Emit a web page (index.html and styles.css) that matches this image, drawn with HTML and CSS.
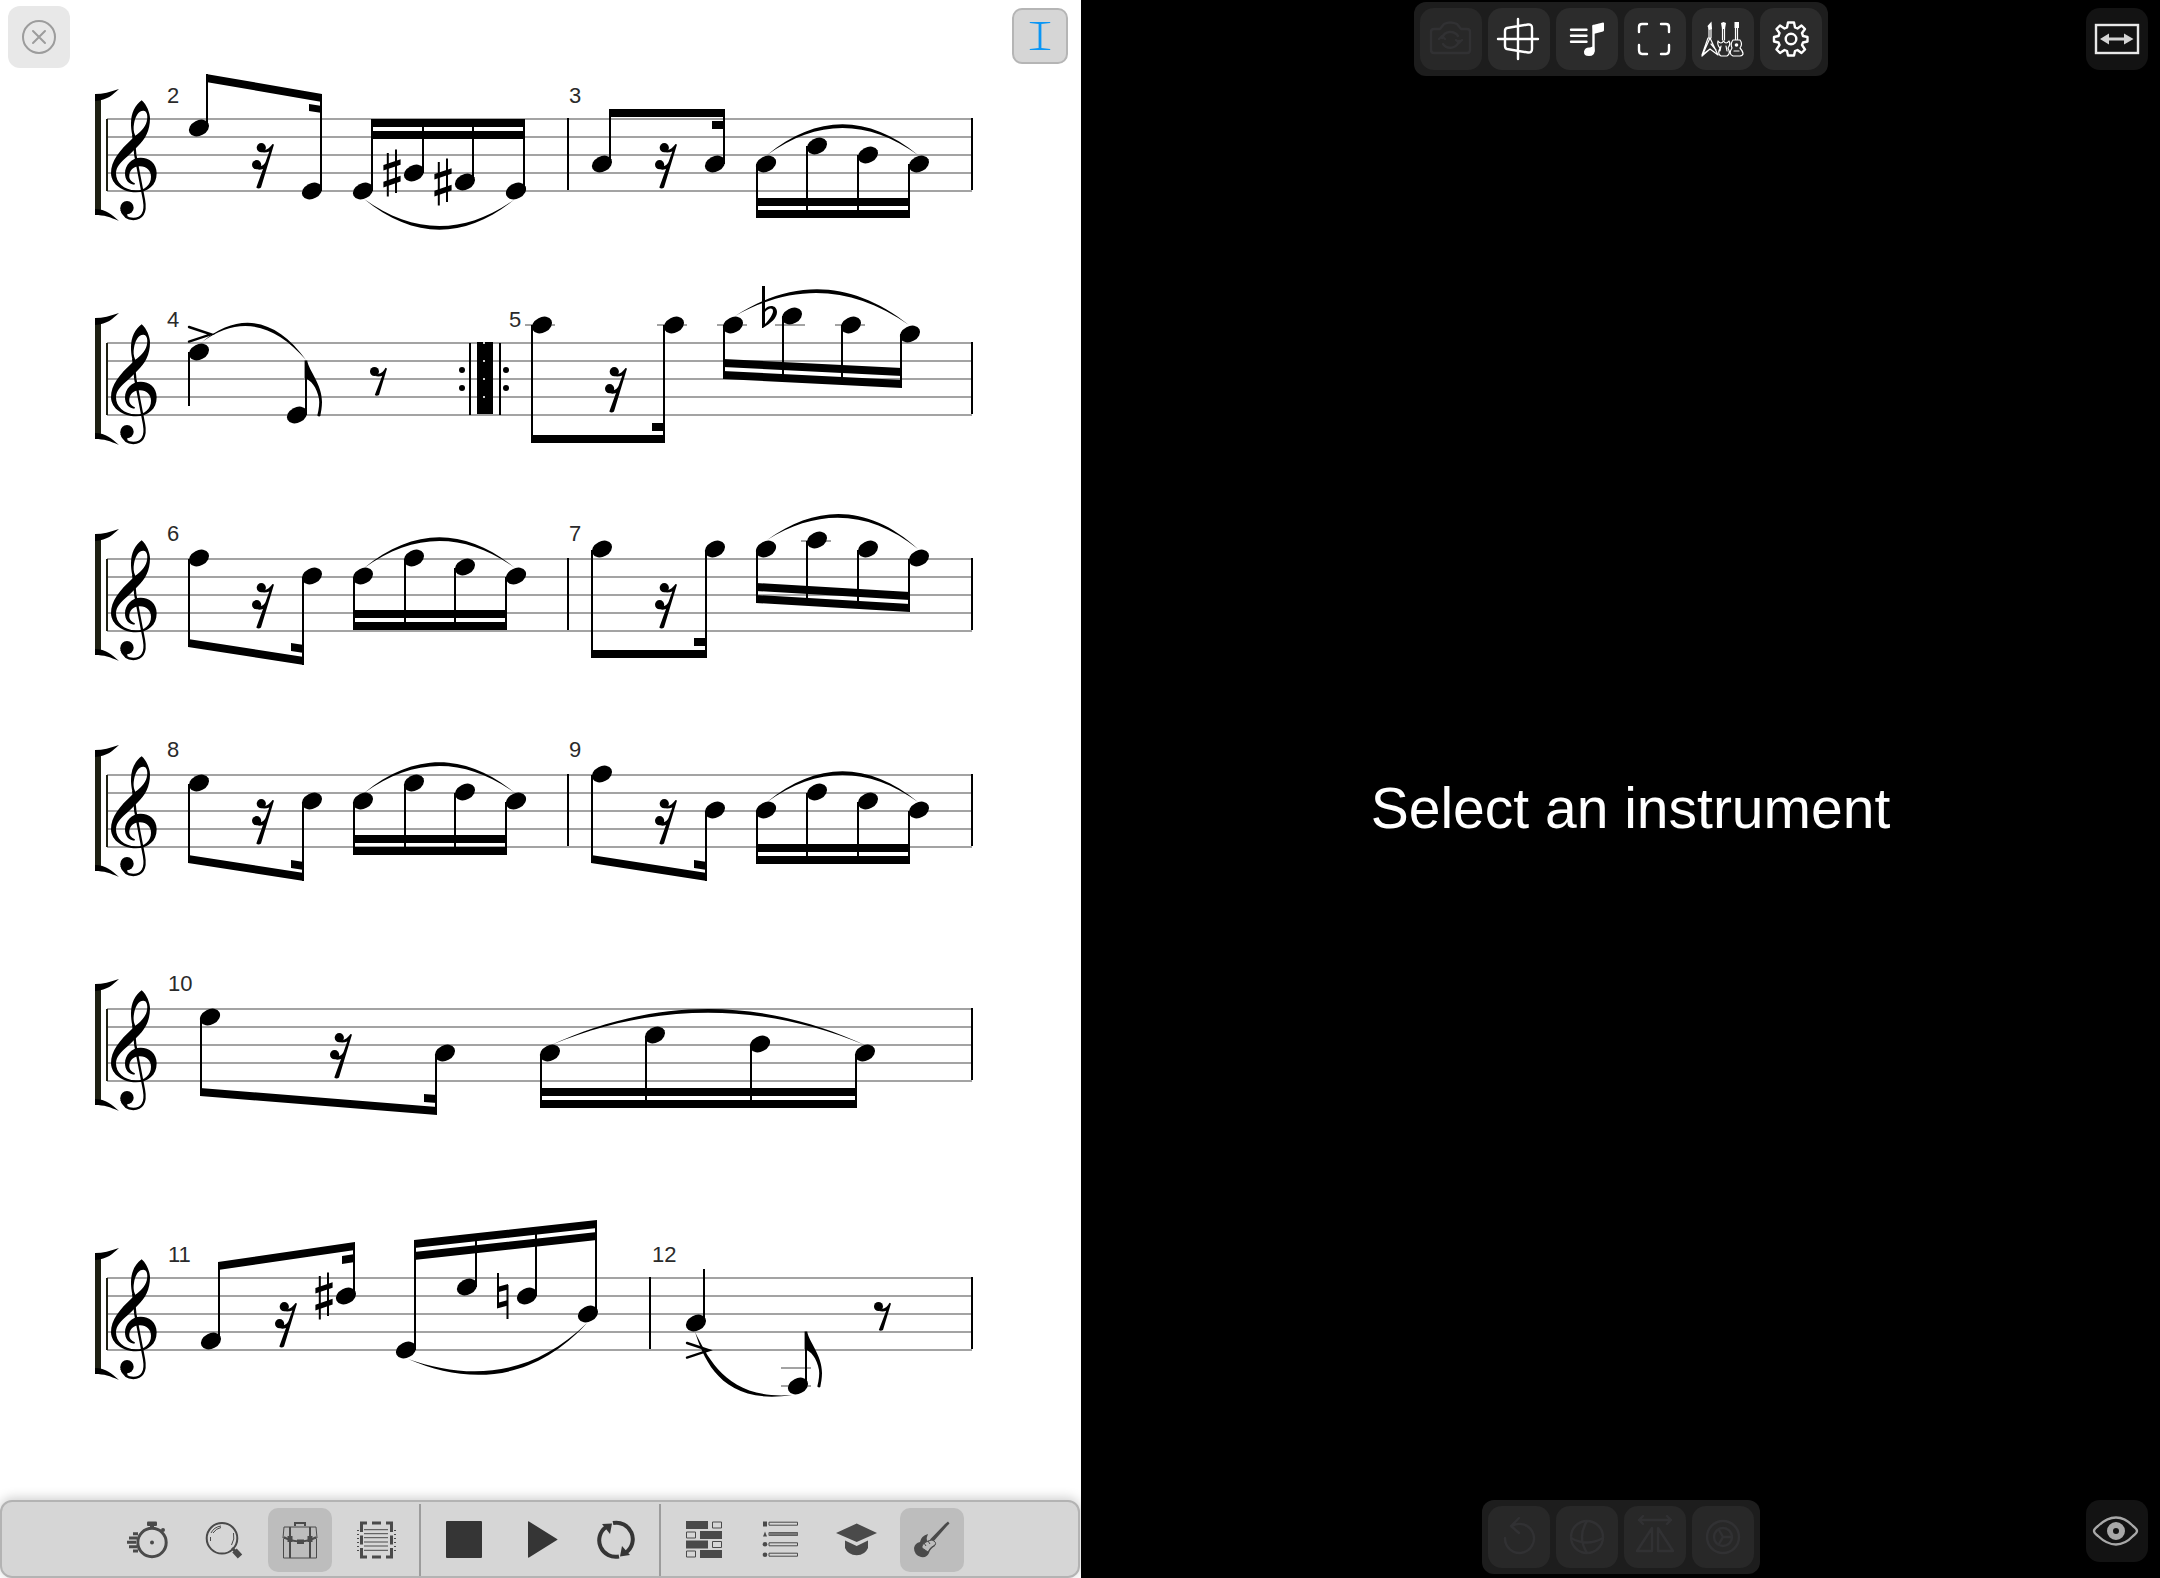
FILE: index.html
```html
<!DOCTYPE html>
<html lang="en">
<head>
<meta charset="utf-8">
<meta name="viewport" content="width=device-width, initial-scale=1">
<title>Score and instrument</title>
<link rel="stylesheet" href="styles.css">
</head>
<body>
<svg class="defs" aria-hidden="true">
  <defs>
    <ellipse id="head" rx="10.6" ry="7.7" transform="rotate(-27)"/>
    <g id="clef">
      <path d="M185 151C165 165 153 190 153 220C153 240 156 252 159 264C118 302 93 332 93 370C94 405 130 427 168 427C205 427 230 405 230 370C230 340 208 323 182 323C155 323 135 345 135 370C135 390 145 402 163 404L165 400C150 393 147 385 148 375C150 358 163 349 180 349C200 349 213 362 213 380C213 404 195 421 168 421C130 421 108 397 108 370C108 341 140 325 172 290C196 268 210 242 210 205C210 190 200 163 185 151ZM190 182C202 182 204 200 200 215C195 233 180 247 166 257C160 245 160 233 162 222C165 200 175 182 190 182Z"/>
      <path class="curl" d="M160 255L166 315L192 450C199 490 185 507 160 507C143 507 130 497 124 479"/>
      <circle cx="141" cy="473" r="20"/>
      <path d="M121 473L125 490L143 500L141 490L150 487Z"/>
    </g>
    <g id="staff">
      <path class="line" d="M107 0H972M107 18H972M107 36H972M107 54H972M107 72H972"/>
      <path class="edge" d="M107 0V72"/>
      <path class="bar" d="M972 -1V71"/>
      <rect class="brace" x="95" y="-22" width="6" height="115"/>
      <path d="M95 -25C103 -25 110 -27 119 -30C112 -24 108 -19 95 -18ZM95 90C106 90 112 96 119 102C110 98 104 96 95 96Z"/>
      <use href="#clef" transform="translate(80 -69) scale(.3333)"/>
    </g>
    <g id="rest16"><circle cx="9.3" cy="4.7" r="4.6"/><circle cx="4.6" cy="21.7" r="4.6"/><path d="M20.5 1L22 1.4L9 44.5Q6.5 46.5 4.3 44.5L17.3 8.4Q13 10 9 9L12 7.5Q17 6 20.5 1ZM8 23Q12 23 14 18L13 25Q8 28 5 26Z"/></g>
    <g id="rest8"><circle cx="4.5" cy="4.5" r="4.5"/><path d="M15.5 .8L17 1.4L9 28Q6.5 29.5 4.8 28L12.2 8.8Q9 10 5 9L8 7Q13 6 15.5 .8Z"/></g>
    <g id="sharp"><path class="thin" d="M-4.2 -20V23.5M4 -23.5V20"/><path d="M-8.6 -8L8.6 -13.8V-8.2L-8.6 -2.4ZM-8.6 8.8L8.6 2.8V8.4L-8.6 14.4Z"/></g>
    <path id="accent" class="accent" d="M0 0L22 7.3L0 14.6"/>
    <path id="flag" d="M-1.4 -.5H1.2C2.4 9 16 23 16 41C16 46 15 51 14.3 55Q13 56 11.3 54.5C13 48 13.6 42 13 38C11 26 4.5 19 -1.4 17Z"/>
    <path id="slur" d="M0 0C50 -41 101 -41 151 0C101 -36 50 -36 0 0Z"/>
  </defs>
</svg>

<main class="app">
  <section class="score-pane" aria-label="Score">
    <button class="close" aria-label="Close"><svg viewBox="0 0 62 62"><circle cx="31" cy="31" r="16"/><path d="M25 25L37 37M37 25L25 37"/></svg></button>
    <button class="cursor" aria-label="Text cursor"><svg viewBox="0 0 56 56"><path d="M17 13H39V14L29.5 15V41L39 42V43H17V42L26.500 41V15L17 14Z"/></svg></button>

    <div class="score">
      <svg class="system" viewBox="0 -119 1080 260">
        <use href="#staff"/>
        <text x="167" y="-16">2</text>
        <use href="#head" x="199" y="9"/><use href="#head" x="312" y="72"/>
        <path class="stem" d="M207 9V-45M321 72V-25"/>
        <path d="M206 -45L322 -25V-17L206 -37ZM309 -15L322 -13V-6L309 -8Z"/>
        <use href="#rest16" x="252" y="24"/>
        <use href="#head" x="363" y="72"/><use href="#head" x="414" y="54"/><use href="#head" x="465" y="63"/><use href="#head" x="516" y="72"/>
        <use href="#sharp" x="392" y="54"/><use href="#sharp" x="443" y="63"/>
        <path class="stem" d="M372 72V0M423 54V0M473 63V0M524 72V0"/>
        <path d="M371 0H525V8H371ZM371 12H525V20H371Z"/>
        <use href="#slur" transform="translate(364 80) scale(1 -1)"/>
        <path class="bar" d="M568 -1V71"/>
        <text x="569" y="-16">3</text>
        <use href="#head" x="602" y="45"/><use href="#head" x="715" y="45"/>
        <path class="stem" d="M610 45V-10M724 45V-10"/>
        <path d="M609 -10H725V-2H609ZM712 2H725V10H712Z"/>
        <use href="#rest16" x="655" y="24"/>
        <use href="#head" x="766" y="45"/><use href="#head" x="817" y="27"/><use href="#head" x="868" y="36"/><use href="#head" x="919" y="45"/>
        <path class="stem" d="M757 45V98M807 27V98M858 36V98M909 45V98"/>
        <path d="M756 79H910V87H756ZM756 91H910V99H756Z"/>
        <use href="#slur" x="767" y="36"/>
      </svg>

      <svg class="system" viewBox="0 -83 1080 220">
        <use href="#staff"/>
        <text x="167" y="-16">4</text>
        <use href="#accent" x="189" y="-16"/>
        <use href="#head" x="199" y="9"/><use href="#head" x="297" y="72"/>
        <path class="stem" d="M189 9V63M306 72V18"/>
        <use href="#flag" x="306" y="18"/>
        <path d="M202 -1C239 -32 276 -25 306 17C274 -20 239 -28 202 -1Z"/>
        <use href="#rest8" x="370" y="24"/>
        <circle cx="462" cy="27" r="3"/><circle cx="462" cy="45" r="3"/><circle cx="506" cy="27" r="3"/><circle cx="506" cy="45" r="3"/>
        <path class="bar" d="M470 0V72M500 0V72"/>
        <rect x="477" y="-1" width="16" height="72"/>
        <path class="speck" d="M483 0h2M483 18h2M483 36h2M483 54h2"/>
        <text x="509" y="-16">5</text>
        <path class="ledger" d="M525 -18H555M657 -18H687M717 -18H747M775 -18H805M835 -18H865"/>
        <use href="#head" x="542" y="-18"/><use href="#head" x="674" y="-18"/>
        <path class="stem" d="M532 -18V99M664 -18V99"/>
        <path d="M531 92H665V100H531ZM652 80H665V88H652Z"/>
        <use href="#rest16" x="605" y="24"/>
        <use href="#head" x="733" y="-18"/><use href="#head" x="792" y="-27"/><use href="#head" x="851" y="-18"/><use href="#head" x="910" y="-9"/>
        <path class="stem" d="M724 -18V35M783 -27V37M842 -18V40M901 -9V44"/>
        <path d="M723 16L902 25V33L723 24ZM723 28L902 37V45L723 36Z"/>
        <path fill-rule="evenodd" d="M762 -57H765V-34C769 -39 777 -38 777 -31C777 -25 771 -20 763 -15H762ZM765 -31V-19C770 -24 773 -29 773 -32C773 -36 768 -35 765 -31Z"/>
        <path d="M735 -27C794 -65 852 -63 909 -18C852 -58 794 -60 735 -27Z"/>
      </svg>

      <svg class="system" viewBox="0 -79 1080 220">
        <use href="#staff"/>
        <text x="167" y="-18">6</text>
        <use href="#head" x="199" y="-1"/><use href="#head" x="312" y="17"/>
        <path class="stem" d="M189 0V87M303 18V106"/>
        <path d="M188 80L304 98V106L188 88ZM291 84L304 86V94L291 92Z"/>
        <use href="#rest16" x="252" y="24"/>
        <use href="#head" x="363" y="17"/><use href="#head" x="414" y="-1"/><use href="#head" x="465" y="8"/><use href="#head" x="516" y="17"/>
        <path class="stem" d="M354 18V70M405 0V70M455 9V70M506 18V70"/>
        <path d="M353 51H507V59H353ZM353 63H507V71H353Z"/>
        <use href="#slur" x="364" y="9"/>
        <path class="bar" d="M568 -1V71"/>
        <text x="569" y="-18">7</text>
        <path class="ledger" d="M801 -18H831"/>
        <use href="#head" x="602" y="-10"/><use href="#head" x="715" y="-10"/>
        <path class="stem" d="M592 -9V98M706 -9V98"/>
        <path d="M591 91H707V99H591ZM694 79H707V87H694Z"/>
        <use href="#rest16" x="655" y="24"/>
        <use href="#head" x="766" y="-10"/><use href="#head" x="817" y="-19"/><use href="#head" x="868" y="-10"/><use href="#head" x="919" y="-1"/>
        <path class="stem" d="M757 -9V43M807 -18V46M858 -9V49M909 0V52"/>
        <path d="M756 24L910 33V41L756 32ZM756 36L910 45V53L756 44Z"/>
        <path d="M767 -19C818 -56 870 -54 918 -10C870 -49 818 -51 767 -19Z"/>
      </svg>

      <svg class="system" viewBox="0 -75 1080 230">
        <use href="#staff"/>
        <text x="167" y="-18">8</text>
        <use href="#head" x="199" y="8"/><use href="#head" x="312" y="26"/>
        <path class="stem" d="M189 9V87M303 27V106"/>
        <path d="M188 80L304 98V106L188 88ZM291 85L304 87V95L291 93Z"/>
        <use href="#rest16" x="252" y="24"/>
        <use href="#head" x="363" y="26"/><use href="#head" x="414" y="8"/><use href="#head" x="465" y="17"/><use href="#head" x="516" y="26"/>
        <path class="stem" d="M354 27V79M405 9V79M455 18V79M506 27V79"/>
        <path d="M353 60H507V68H353ZM353 72H507V80H353Z"/>
        <use href="#slur" x="364" y="18"/>
        <path class="bar" d="M568 -1V71"/>
        <text x="569" y="-18">9</text>
        <use href="#head" x="602" y="-1"/><use href="#head" x="715" y="35"/>
        <path class="stem" d="M592 0V87M706 36V106"/>
        <path d="M591 80L707 98V106L591 88ZM694 85L707 87V95L694 93Z"/>
        <use href="#rest16" x="655" y="24"/>
        <use href="#head" x="766" y="35"/><use href="#head" x="817" y="17"/><use href="#head" x="868" y="26"/><use href="#head" x="919" y="35"/>
        <path class="stem" d="M757 36V88M807 18V88M858 27V88M909 36V88"/>
        <path d="M756 69H910V77H756ZM756 81H910V89H756Z"/>
        <use href="#slur" x="767" y="27"/>
      </svg>

      <svg class="system" viewBox="0 -79 1080 240">
        <use href="#staff"/>
        <text x="168" y="-18">10</text>
        <use href="#head" x="210" y="8"/><use href="#head" x="445" y="44"/>
        <path class="stem" d="M201 9V87M436 45V105"/>
        <path d="M200 79L437 98V106L200 87ZM424 85L437 86V94L424 93Z"/>
        <use href="#rest16" x="330" y="24"/>
        <use href="#head" x="550" y="44"/><use href="#head" x="655" y="26"/><use href="#head" x="760" y="35"/><use href="#head" x="865" y="44"/>
        <path class="stem" d="M541 45V98M646 27V98M751 36V98M856 45V98"/>
        <path d="M540 79H857V87H540ZM540 91H857V99H540Z"/>
        <path d="M551 36C655 -12 761 -12 865 36C761 -7 655 -7 551 36Z"/>
      </svg>

      <svg class="system" viewBox="0 -108 1080 240">
        <use href="#staff"/>
        <text x="168" y="-16">11</text>
        <use href="#head" x="211" y="63"/><use href="#head" x="346" y="18"/>
        <use href="#sharp" x="324" y="18"/>
        <path class="stem" d="M219 63V-16M354 18V-35"/>
        <path d="M218 -16L355 -36V-28L218 -8ZM342 -22L355 -24V-16L342 -14Z"/>
        <use href="#rest16" x="275" y="24"/>
        <use href="#head" x="406" y="72"/><use href="#head" x="467" y="9"/><use href="#head" x="527" y="18"/><use href="#head" x="588" y="36"/>
        <path class="stem" d="M415 72V-38M476 9V-44M536 18V-51M596 36V-57"/>
        <path d="M414 -38L597 -58V-50L414 -30ZM414 -26L597 -46V-38L414 -18Z"/>
        <path class="thin" d="M498 -5V29M507.500 7V41"/>
        <path d="M497 9L508 6V11.500L497 14.500ZM497 25L508 22V27.500L497 30.500Z"/>
        <path d="M408 81C468 107 532 105 587 45C530 100 468 102 408 81Z"/>
        <path class="bar" d="M650 -1V71"/>
        <text x="652" y="-16">12</text>
        <path class="ledger" d="M781 90H811M781 108H811"/>
        <use href="#head" x="696" y="45"/><use href="#head" x="798" y="108"/>
        <path class="stem" d="M704 45V-9M806 108V54"/>
        <use href="#flag" x="806" y="54"/>
        <use href="#accent" x="687" y="65"/>
        <use href="#rest8" x="874" y="24"/>
        <path d="M695 54C704 82 722 128 792 117C728 122 709 82 695 54Z"/>
      </svg>
    </div>

    <nav class="toolbar" aria-label="Score tools">
      <div class="group">
        <button aria-label="Tempo"><svg viewBox="0 0 64 64"><circle class="l" cx="36" cy="34.500" r="14.200"/><rect x="31" y="13.500" width="10" height="4.500" rx="1"/><path d="M34 17h4v4h-4z"/><circle cx="36" cy="34.500" r="2"/><circle cx="47" cy="22" r="2"/><path class="l" d="M17 25.700H22M13 30H21M11 34.300H20M13 38.700H21M17 43H22"/></svg></button>
        <button aria-label="Zoom"><svg viewBox="0 0 64 64"><circle class="l thinner" cx="30" cy="30.300" r="15.300"/><path class="h" d="M19 25Q22 19 29 18M21 25Q24 20.500 29 19.500M18.500 33V29M41.500 25Q43 31 39.500 37"/><path class="l" d="M40 40L43 43"/><path class="fat" d="M42.500 42.500L48 48.500"/></svg></button>
        <button class="on" aria-label="Toolbox"><svg viewBox="0 0 64 64"><path class="t" d="M16 19H48L49 30Q41 33 32 34Q23 33 15 30ZM15.500 31V50H48.500V31M27 18V14.500H37V18"/><path class="l thinner" d="M22 19V50M42 19V50M27 18V15H37V18"/><path class="l thinner" d="M16 29Q32 38 48 29"/><rect x="29" y="31.500" width="7" height="4.500"/><rect x="19.500" y="28" width="5" height="6"/><rect x="39.500" y="28" width="5" height="6"/></svg></button>
        <button aria-label="Select area"><svg viewBox="0 0 64 64"><path class="l" d="M17.500 24V15H23M28 15H37M42 15H47.500V24M17.500 27.500V36.500M47.500 27.500V36.500M17.500 40V49H23M28 49H37M42 49H47.500V40"/><path class="h" d="M20 21.700H44M20 25.700H44M20 29.700H44M20 34H44M20 38H44M20 42.300H44"/><path class="dots" d="M14 22V44M51 22V44"/></svg></button>
      </div>
      <div class="group">
        <button class="dark" aria-label="Stop"><svg viewBox="0 0 64 64"><rect x="14" y="13" width="36" height="37" rx="1"/></svg></button>
        <button class="dark" aria-label="Play"><svg viewBox="0 0 64 64"><path d="M20 14Q20 13 21 13.500L49 31Q50 31.500 49 32L21 49.500Q20 50 20 49Z"/></svg></button>
        <button class="dark" aria-label="Loop"><svg viewBox="0 0 64 64"><path class="ring" d="M29 15A16.500 16.500 0 0 1 42 44.500M35 48.500A16.500 16.500 0 0 1 22 19"/><path d="M18 16L28 15.500L26 26ZM46 47L36 48.500L38 38Z"/></svg></button>
      </div>
      <div class="group">
        <button aria-label="Tracks"><svg viewBox="0 0 64 64"><path d="M14 13h22v8H14zM28 23h22v8H28zM14 32.500h22v8H14zM28 42h22v8H28z"/><path class="h" d="M40.500 14h9v6h-9zM14.500 24h9v6h-9zM40.500 33.500h9v6h-9zM14.500 43h9v6h-9z"/></svg></button>
        <button aria-label="Mixer"><svg viewBox="0 0 64 64"><path d="M15 13.500h4v5h-4zM15 28.500l2-5 2 5z"/><circle cx="17" cy="36.300" r="2.300"/><circle cx="17" cy="46.700" r="2.300"/><path class="t" d="M21 14.200H49.500V17.200H21ZM21 24.500H49.500V27.500H21ZM21 34.800H49.500V37.800H21ZM21 45.200H49.500V48.200H21Z"/><path class="mid" d="M21 26H49.500"/></svg></button>
        <button aria-label="Lessons"><svg viewBox="0 0 64 64"><path d="M12 25L32.700 15.500L53 25L32.700 34Z"/><path d="M21 32.500L32.700 38L44 32.500V40Q41 47 32.700 47.300Q24 47 21 40Z"/></svg></button>
        <button class="on" aria-label="Instrument"><svg viewBox="0 0 64 64"><path d="M45 16L48 13.500L49.500 15.500L47 18L33 34L30 31.500Z"/><path d="M28 26Q26 30 27 33L31 34Q37 33 35 38Q30 41 29 45Q27 50 21 49Q14 47 14 40Q15 35 20 34Q21 28 28 26Z"/><path class="plate" d="M28 33L32 32Q37 34 35 37Q30 39 28 44L22 40Q21 36 28 33Z"/><path class="h" d="M24 35L26 38M28 33L30 36"/></svg></button>
      </div>
    </nav>
  </section>

  <section class="view-pane" aria-label="Instrument view">
    <header class="row">
      <div class="panel">
        <button disabled aria-label="Switch camera"><svg viewBox="0 0 62 62"><path d="M14 21H20L24 16Q30 13 37 16L41 21H47Q50 21 50 24V42Q50 45 47 45H14Q11 45 11 42V24Q11 21 14 21ZM22 30A9 9 0 0 1 38 28M39 33A9 9 0 0 1 23 36M19 31L22 28L25 31M36 32L39 35L42 32"/></svg></button>
        <button aria-label="Perspective"><svg viewBox="0 0 62 62"><path d="M30 11V51M10 31H50M19 20L40 16.500Q44 16 44 20V41Q44 45 40 44.500L19 41Q17 40.500 17 38V23Q17 20.500 19 20Z"/></svg></button>
        <button aria-label="Playlist"><svg viewBox="0 0 62 62"><path d="M15 21.700H30.500M15 27.700H30.500M15 33.700H30.500M37.500 18V43"/><path class="solid" d="M36.500 18Q36.500 17 38 16.700L47 14.500Q48 14.500 48 15.500V22Q48 23 47 23.500L37.500 26ZM38.500 42Q39 48 33 48Q27.500 48 28 43.500Q29 39 34 39.500L38 38Z"/></svg></button>
        <button aria-label="Full screen"><svg viewBox="0 0 62 62"><path d="M15 24V19Q15 16 18 16H23M37 16H42Q45 16 45 19V24M45 37V42Q45 46 42 46H37M23 46H18Q15 46 15 42V37"/></svg></button>
        <button aria-label="Instruments"><svg viewBox="0 0 62 62"><path class="fine" d="M17 30V20M19 30V20M30.500 32V20M32.500 32V20M43.500 32V20M45.500 32V20M18 30L26 47L18 41L10 48ZM16 30L10 47L18 41M26 33Q25 37 28 40Q25 46 29 48H35Q39 46 36 40Q39 36 37 33Q34 37 31.500 33Q29 37 26 33ZM41 32H48Q51 36 48 40Q54 47 48 48H41Q36 46 40 40Q38 36 41 32ZM42 43H47M19 36L24 42M29 38L28 43M34 38L35 43"/><path class="solid" d="M15.500 18L19.500 13.500L20 21L17 22ZM29 15L31.500 14L34 15L33 21H30ZM42.500 14H47V20H42.500Z"/><circle class="solid" cx="44.500" cy="37" r="1.800"/></svg></button>
        <button aria-label="Settings"><svg viewBox="0 0 62 62"><path d="M28 14.500H34L35 19.500L37.500 20.500L41.500 17.500L45 21L42 25L43 28L47.500 29V33.500L43 34.500L42 37L45 41.500L41.500 45L37.500 42L35 43L34 47.500H28L27 43L24.500 42L20 45L16.500 41.500L19.500 37L18.500 34.500L14 33.500V29L18.500 28L19.500 25L16.500 21L20 17.500L24.500 20.500L27 19.500Z"/><circle cx="31" cy="31" r="5.300"/></svg></button>
      </div>
      <button class="corner" aria-label="Resize pane"><svg viewBox="0 0 62 62"><rect x="10" y="17" width="42" height="28"/><path class="solid" d="M14 31L23 25.500V29.500H38V25.500L47.500 31L38 36.500V32.500H23V36.500Z"/></svg></button>
    </header>
    <p class="message">Select an instrument</p>
    <footer class="row bottom">
      <div class="panel">
        <button disabled aria-label="Undo"><svg viewBox="0 0 62 62"><path d="M17 32A14.500 14.500 0 1 0 24 20M31 12L23 20L31 27"/></svg></button>
        <button disabled aria-label="Rotate"><svg viewBox="0 0 62 62"><circle cx="31" cy="31" r="16"/><path d="M15 32Q31 41 47 32M31 15Q21 31 31 47"/></svg></button>
        <button disabled aria-label="Mirror"><svg viewBox="0 0 62 62"><path d="M15 14H47M19 10L15 14L19 18M43 10L47 14L43 18M28 22V45H13ZM34 22V45H49Z"/></svg></button>
        <button disabled aria-label="Tuning"><svg viewBox="0 0 62 62"><circle cx="31" cy="31" r="16"/><circle cx="31" cy="31" r="9"/><path d="M31 31L27 24M31 31H39M31 31L27 38"/></svg></button>
      </div>
      <button class="corner eye" aria-label="Show"><svg viewBox="0 0 62 62"><path d="M8 31Q8 29 12 26Q21 17.500 30 17.500Q39 17.500 47 26Q51 29 51 31Q51 33 47 36Q39 44.500 30 44.500Q21 44.500 12 36Q8 33 8 31Z"/><circle class="pupil" cx="30" cy="31" r="6"/></svg></button>
    </footer>
  </section>
</main>
</body>
</html>
```

FILE: styles.css
```css
* { box-sizing: border-box; }
body { margin: 0; background: #000; font-family: "Liberation Sans", Arial, sans-serif; }
button { padding: 0; border: 0; font: inherit; flex: none; }
button svg { display: block; width: 100%; height: 100%; }
.defs { position: absolute; width: 0; height: 0; }

.app { display: grid; grid-template-columns: 1081fr 1079fr; min-height: 100vh; }

/* Score side */
.score-pane { position: relative; display: flex; flex-direction: column; padding-right: 1px; background: #fff; }
.close { position: absolute; left: 8px; top: 6px; width: 62px; height: 62px; border-radius: 12px; background: #e8e8e8; }
.close svg { fill: none; stroke: #9c9c9c; stroke-width: 2; }
.close path { stroke-linecap: round; }
.cursor { position: absolute; right: 13px; top: 8px; width: 56px; height: 56px; border: 2px solid #b5b5b5; border-radius: 10px; background: #d6d6d6; }
.cursor svg { fill: #0a96f5; }

.score { flex: 1; }
.system { display: block; width: 100%; overflow: visible; }
.system text { font-size: 22px; fill: #2a2a2a; }
.line, .ledger { fill: none; stroke: #a3a3a3; stroke-width: 2; }
.edge { fill: none; stroke: #1e2013; stroke-width: 2; }
.brace { fill: #1e2013; }
.bar, .stem, .thin { fill: none; stroke: #000; stroke-width: 2; }
.speck { fill: none; stroke: #ccc; stroke-width: 2; }
.accent { fill: none; stroke: #000; stroke-width: 2.4; stroke-linecap: round; }
.curl { fill: none; stroke: #000; stroke-width: 7; }

.toolbar { display: flex; justify-content: center; height: 78px; border: 2px solid #b3b3b3; border-radius: 12px; background: #d6d6d6; box-shadow: 0 -2px 12px rgba(0, 0, 0, .2); }
.group { display: flex; align-items: center; gap: 12px; margin: 2px 0 0; padding: 0 11px; }
.group + .group { border-left: 2px solid #9c9c9c; }
.toolbar button { width: 64px; height: 64px; border-radius: 10px; background: transparent; }
.toolbar button.on { background: #bdbdbd; }
.toolbar svg { fill: #4a4a4a; stroke: none; }
.toolbar .dark svg { fill: #353535; }
.toolbar .l { fill: none; stroke: #4a4a4a; stroke-width: 3; }
.toolbar .thinner { stroke-width: 2; }
.toolbar .t { fill: none; stroke: #4a4a4a; stroke-width: 1; }
.toolbar .h { fill: none; stroke: #4a4a4a; stroke-width: 1; }
.toolbar .mid { fill: none; stroke: #777; stroke-width: 3; }
.toolbar .fat { fill: none; stroke: #4a4a4a; stroke-width: 6; }
.toolbar .dots { fill: none; stroke: #4a4a4a; stroke-width: 2; stroke-dasharray: 1 3; }
.toolbar .ring { fill: none; stroke: #353535; stroke-width: 4; }
.toolbar .plate { fill: #bdbdbd; stroke: #4a4a4a; stroke-width: 1; }

/* Instrument side */
.view-pane { display: flex; flex-direction: column; background: #000; }
.row { display: grid; grid-template-columns: 1fr auto 1fr; align-items: center; padding: 2px 12px; }
.bottom { padding-bottom: 4px; }
.panel { grid-column: 2; display: flex; gap: 6px; padding: 6px; border-radius: 12px; background: #1d1d1d; }
.row button { width: 62px; height: 62px; border-radius: 14px; background: #2c2c2c; }
.row button:disabled { background: #282828; }
.row svg { fill: none; stroke: #fff; stroke-width: 2.4; stroke-linecap: round; stroke-linejoin: round; }
.row button:disabled svg { stroke: #313133; }
.row .fine { stroke-width: 1.2; }
.row .solid { fill: #fff; stroke: none; }
.row .corner { grid-column: 3; justify-self: end; background: #131313; }
.corner .solid { fill: #d4d4d4; }
.row .corner svg { stroke: #e8e8e8; stroke-linejoin: miter; }
.row .eye svg { stroke: #a8a8a8; stroke-width: 2.4; }
.row .eye { align-self: start; }
.eye .pupil { stroke-width: 6; }
.message { flex: 1; display: flex; align-items: center; justify-content: center; margin: 0; padding: 40px 0 0 20px; color: #fff; font-size: 57px; }
```
